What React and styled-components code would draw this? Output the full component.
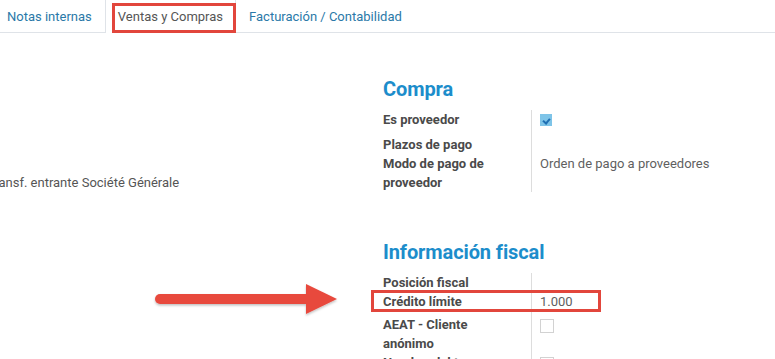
import React from 'react'
import styled, { createGlobalStyle } from 'styled-components'

const GlobalStyle = createGlobalStyle`
  body {
    margin: 0;
    background: #fff;
    font-family: Roboto, "Liberation Sans", sans-serif;
    overflow: hidden;
  }
`

const RED = '#e2463c'

function App() {
  return (
    <>
      <GlobalStyle />
      <Page>
        <TabBar>
          <Tab first>Notas internas</Tab>
          <Tab active marked>Ventas y Compras</Tab>
          <Tab>Facturación / Contabilidad</Tab>
        </TabBar>
        <Sheet>
          <LeftCol>
            <PlainValue>Transf. entrante Société Générale</PlainValue>
          </LeftCol>
          <RightCol>
            <Heading>Compra</Heading>
            <Fields>
              <Label tall>Es proveedor</Label>
              <Value tall><Check checked /></Value>
              <Label>Plazos de pago</Label>
              <Value />
              <Label>Modo de pago de proveedor</Label>
              <Value>Orden de pago a proveedores</Value>
            </Fields>
            <Heading spaced>Información fiscal</Heading>
            <Fields>
              <Label>Posición fiscal</Label>
              <Value />
              <Label field marked>Crédito límite</Label>
              <Value field>1.000</Value>
              <Label>AEAT - Cliente anónimo</Label>
              <Value><Check /></Value>
              <Label>Nombre del tercero</Label>
              <Value><Check /></Value>
            </Fields>
          </RightCol>
          <Arrow width="192" height="36" viewBox="0 0 192 36">
            <defs>
              <filter id="sh" x="-10%" y="-30%" width="120%" height="160%">
                <feDropShadow dx="0" dy="1.5" stdDeviation="1.2" floodColor="#000" floodOpacity="0.25" />
              </filter>
            </defs>
            <g filter="url(#sh)">
              <rect x="4" y="10" width="156" height="10" rx="5" fill="#e8493e" />
              <path d="M155 0 L186 15 L155 30 Z" fill="#e8493e" />
            </g>
          </Arrow>
        </Sheet>
      </Page>
    </>
  )
}

export default App

const Page = styled.div`
  width: 775px;
  height: 359px;
  overflow: hidden;
`
const TabBar = styled.div`
  display: flex;
  height: 32px;
  border-bottom: 1px solid #dfe3e8;
`
const Tab = styled.div`
  position: relative;
  display: flex;
  align-items: center;
  padding: 0 12px 0 ${p => p.first ? '6px' : '12px'};
  font-size: 13px;
  color: ${p => p.active ? '#555' : '#2a79a8'};
  background: #fff;
  border-left: 1px solid ${p => p.active ? '#dfe3e8' : 'transparent'};
  border-right: 1px solid ${p => p.active ? '#dfe3e8' : 'transparent'};
  margin-bottom: ${p => p.active ? '-1px' : '0'};
  &::after {
    content: '';
    display: ${p => p.marked ? 'block' : 'none'};
    position: absolute;
    left: 6px;
    right: -1px;
    top: 3px;
    bottom: 0;
    border: 3px solid ${RED};
  }
`
const Sheet = styled.div`
  position: relative;
  display: grid;
  grid-template-columns: 383px 1fr;
`
const LeftCol = styled.div`
  padding-top: 140px;
  margin-left: -13px;
`
const PlainValue = styled.div`
  font-size: 13px;
  line-height: 19px;
  color: #555;
  white-space: nowrap;
`
const RightCol = styled.div`
  padding-top: 44px;
`
const Heading = styled.div`
  font-size: 20px;
  font-weight: 700;
  line-height: 24px;
  color: #1c8dcb;
  margin-top: ${p => p.spaced ? '48px' : '0'};
  margin-bottom: 9px;
  letter-spacing: -0.1px;
`
const Fields = styled.div`
  display: grid;
  grid-template-columns: 148px 1fr;
  font-size: 13px;
  line-height: 19px;
`
const Label = styled.div`
  position: relative;
  font-weight: 700;
  color: #4a4a4a;
  min-height: ${p => p.tall ? '25px' : p.field ? '23px' : '19px'};
  padding-right: 20px;
  &::after {
    content: '';
    display: ${p => p.marked ? 'block' : 'none'};
    position: absolute;
    left: -12px;
    top: -2px;
    width: 224px;
    height: 16px;
    border: 3px solid ${RED};
  }
`
const Value = styled.div`
  border-left: 1px solid #ddd;
  padding-left: 8px;
  color: #5f5f5f;
  min-height: ${p => p.tall ? '25px' : p.field ? '23px' : '19px'};
`
const Check = styled.span`
  display: block;
  box-sizing: border-box;
  width: ${p => p.checked ? '12px' : '14px'};
  height: ${p => p.checked ? '12px' : '14px'};
  margin-top: 4px;
  border: 1px solid ${p => p.checked ? '#7ec4e8' : '#d2d2d2'};
  background: ${p => p.checked ? '#7ec4e8' : '#fff'};
  position: relative;
  &::after {
    content: '';
    display: ${p => p.checked ? 'block' : 'none'};
    position: absolute;
    left: 3px;
    top: 2px;
    width: 3px;
    height: 5px;
    border: solid #1f6fb3;
    border-width: 0 2px 2px 0;
    transform: rotate(40deg);
  }
`
const Arrow = styled.svg`
  position: absolute;
  left: 151px;
  top: 251px;
`
